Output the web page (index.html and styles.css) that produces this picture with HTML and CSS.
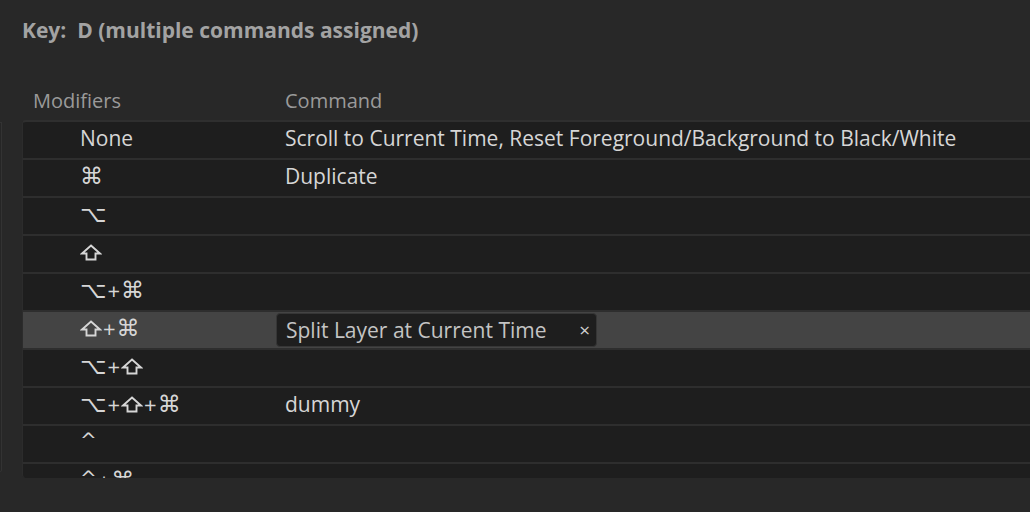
FILE: index.html
```html
<!DOCTYPE html>
<html>
<head>
<meta charset="utf-8">
<link rel="stylesheet" href="styles.css">
</head>
<body>
<div class="page">
  <div class="title">Key:&nbsp; D (multiple commands assigned)</div>
  <div class="head">
    <div class="col-mod">Modifiers</div>
    <div class="col-cmd">Command</div>
  </div>
  <div class="body">
    <div class="side"></div>
    <div class="table">
      <div class="row"><div class="mod">None</div><div class="cmd">Scroll to Current Time, Reset Foreground/Background to Black/White</div></div>
      <div class="row"><div class="mod"><span class="sym">⌘</span></div><div class="cmd">Duplicate</div></div>
      <div class="row"><div class="mod"><span class="sym">⌥</span></div><div class="cmd"></div></div>
      <div class="row"><div class="mod"><svg class="shift" viewBox="0 0 22 17"><path d="M11 1.5 L20 9.5 H15.5 V15.5 H6.5 V9.5 H2 Z" fill="none" stroke="#d6d6d6" stroke-width="1.9" stroke-linejoin="miter"/></svg></div><div class="cmd"></div></div>
      <div class="row"><div class="mod"><span class="sym">⌥</span><span class="plus">+</span><span class="sym">⌘</span></div><div class="cmd"></div></div>
      <div class="row sel"><div class="mod"><svg class="shift" viewBox="0 0 22 17"><path d="M11 1.5 L20 9.5 H15.5 V15.5 H6.5 V9.5 H2 Z" fill="none" stroke="#d6d6d6" stroke-width="1.9" stroke-linejoin="miter"/></svg><span class="plus">+</span><span class="sym">⌘</span></div><div class="cmd"><div class="field"><span>Split Layer at Current Time</span><span class="x">×</span></div></div></div>
      <div class="row"><div class="mod"><span class="sym">⌥</span><span class="plus">+</span><svg class="shift" viewBox="0 0 22 17"><path d="M11 1.5 L20 9.5 H15.5 V15.5 H6.5 V9.5 H2 Z" fill="none" stroke="#d6d6d6" stroke-width="1.9" stroke-linejoin="miter"/></svg></div><div class="cmd"></div></div>
      <div class="row"><div class="mod"><span class="sym">⌥</span><span class="plus">+</span><svg class="shift" viewBox="0 0 22 17"><path d="M11 1.5 L20 9.5 H15.5 V15.5 H6.5 V9.5 H2 Z" fill="none" stroke="#d6d6d6" stroke-width="1.9" stroke-linejoin="miter"/></svg><span class="plus">+</span><span class="sym">⌘</span></div><div class="cmd">dummy</div></div>
      <div class="row"><div class="mod"><span class="sym caret">^</span></div><div class="cmd"></div></div>
      <div class="row"><div class="mod"><span class="sym caret">^</span><span class="plus">+</span><span class="sym">⌘</span></div><div class="cmd"></div></div>
    </div>
  </div>
</div>
</body>
</html>
```
FILE: styles.css
```css
html, body {
  margin: 0;
  padding: 0;
  background: #282828;
  width: 1030px;
  height: 512px;
  overflow: hidden;
}
.page {
  font-family: "Open Sans", "Noto Sans", sans-serif;
  color: #d6d6d6;
}
.title {
  height: 60px;
  line-height: 60px;
  padding-left: 22px;
  font-size: 21px;
  font-weight: 700;
  color: #a3a3a3;
}
.head {
  display: flex;
  height: 60px;
  align-items: center;
  font-size: 20px;
  color: #9a9a9a;
  padding-top: 20px;
  box-sizing: border-box;
}
.col-mod { width: 252px; padding-left: 33px; }
.col-cmd { flex: 1; }
.body {
  display: flex;
  gap: 20px;
}
.side {
  width: 1px;
  height: 348px;
  margin-top: 2px;
  border: 1px solid #333;
  border-left: none;
  border-radius: 0 0 4px 0;
  background: #262626;
}
.table {
  flex: 1;
  height: 358px;
  overflow: hidden;
  background: #1e1e1e;
  border-top: 2px solid #2f2f2f;
  border-left: 1px solid #2c2c2c;
  border-radius: 4px 0 0 4px;
  box-sizing: border-box;
}
.row {
  display: flex;
  height: 38px;
  align-items: center;
  border-bottom: 2px solid #2e2e2e;
  padding-bottom: 4px;
  box-sizing: border-box;
  font-size: 21px;
}
.row.sel { background: #444444; }
.mod {
  width: 205px;
  padding-left: 57px;
  white-space: nowrap;
  display: flex;
  align-items: center;
}
.sym {
  font-family: "DejaVu Sans", sans-serif;
  font-size: 23px;
  line-height: 1;
}
.caret { font-size: 20px; position: relative; top: -2px; }
.plus { font-size: 22px; margin: 0 1px; line-height: 1; }
.shift { width: 22px; height: 17px; display: block; }
.cmd { flex: 1; white-space: nowrap; }
.field {
  display: flex;
  align-items: center;
  justify-content: space-between;
  width: 321px;
  height: 34px;
  margin-left: -9px;
  margin-top: 4px;
  padding: 0 6px 0 9px;
  box-sizing: border-box;
  background: #1e1e1e;
  border: 1px solid #363636;
  border-radius: 4px;
  color: #c4c4c4;
}
.x { font-size: 19px; color: #cfcfcf; }
```
